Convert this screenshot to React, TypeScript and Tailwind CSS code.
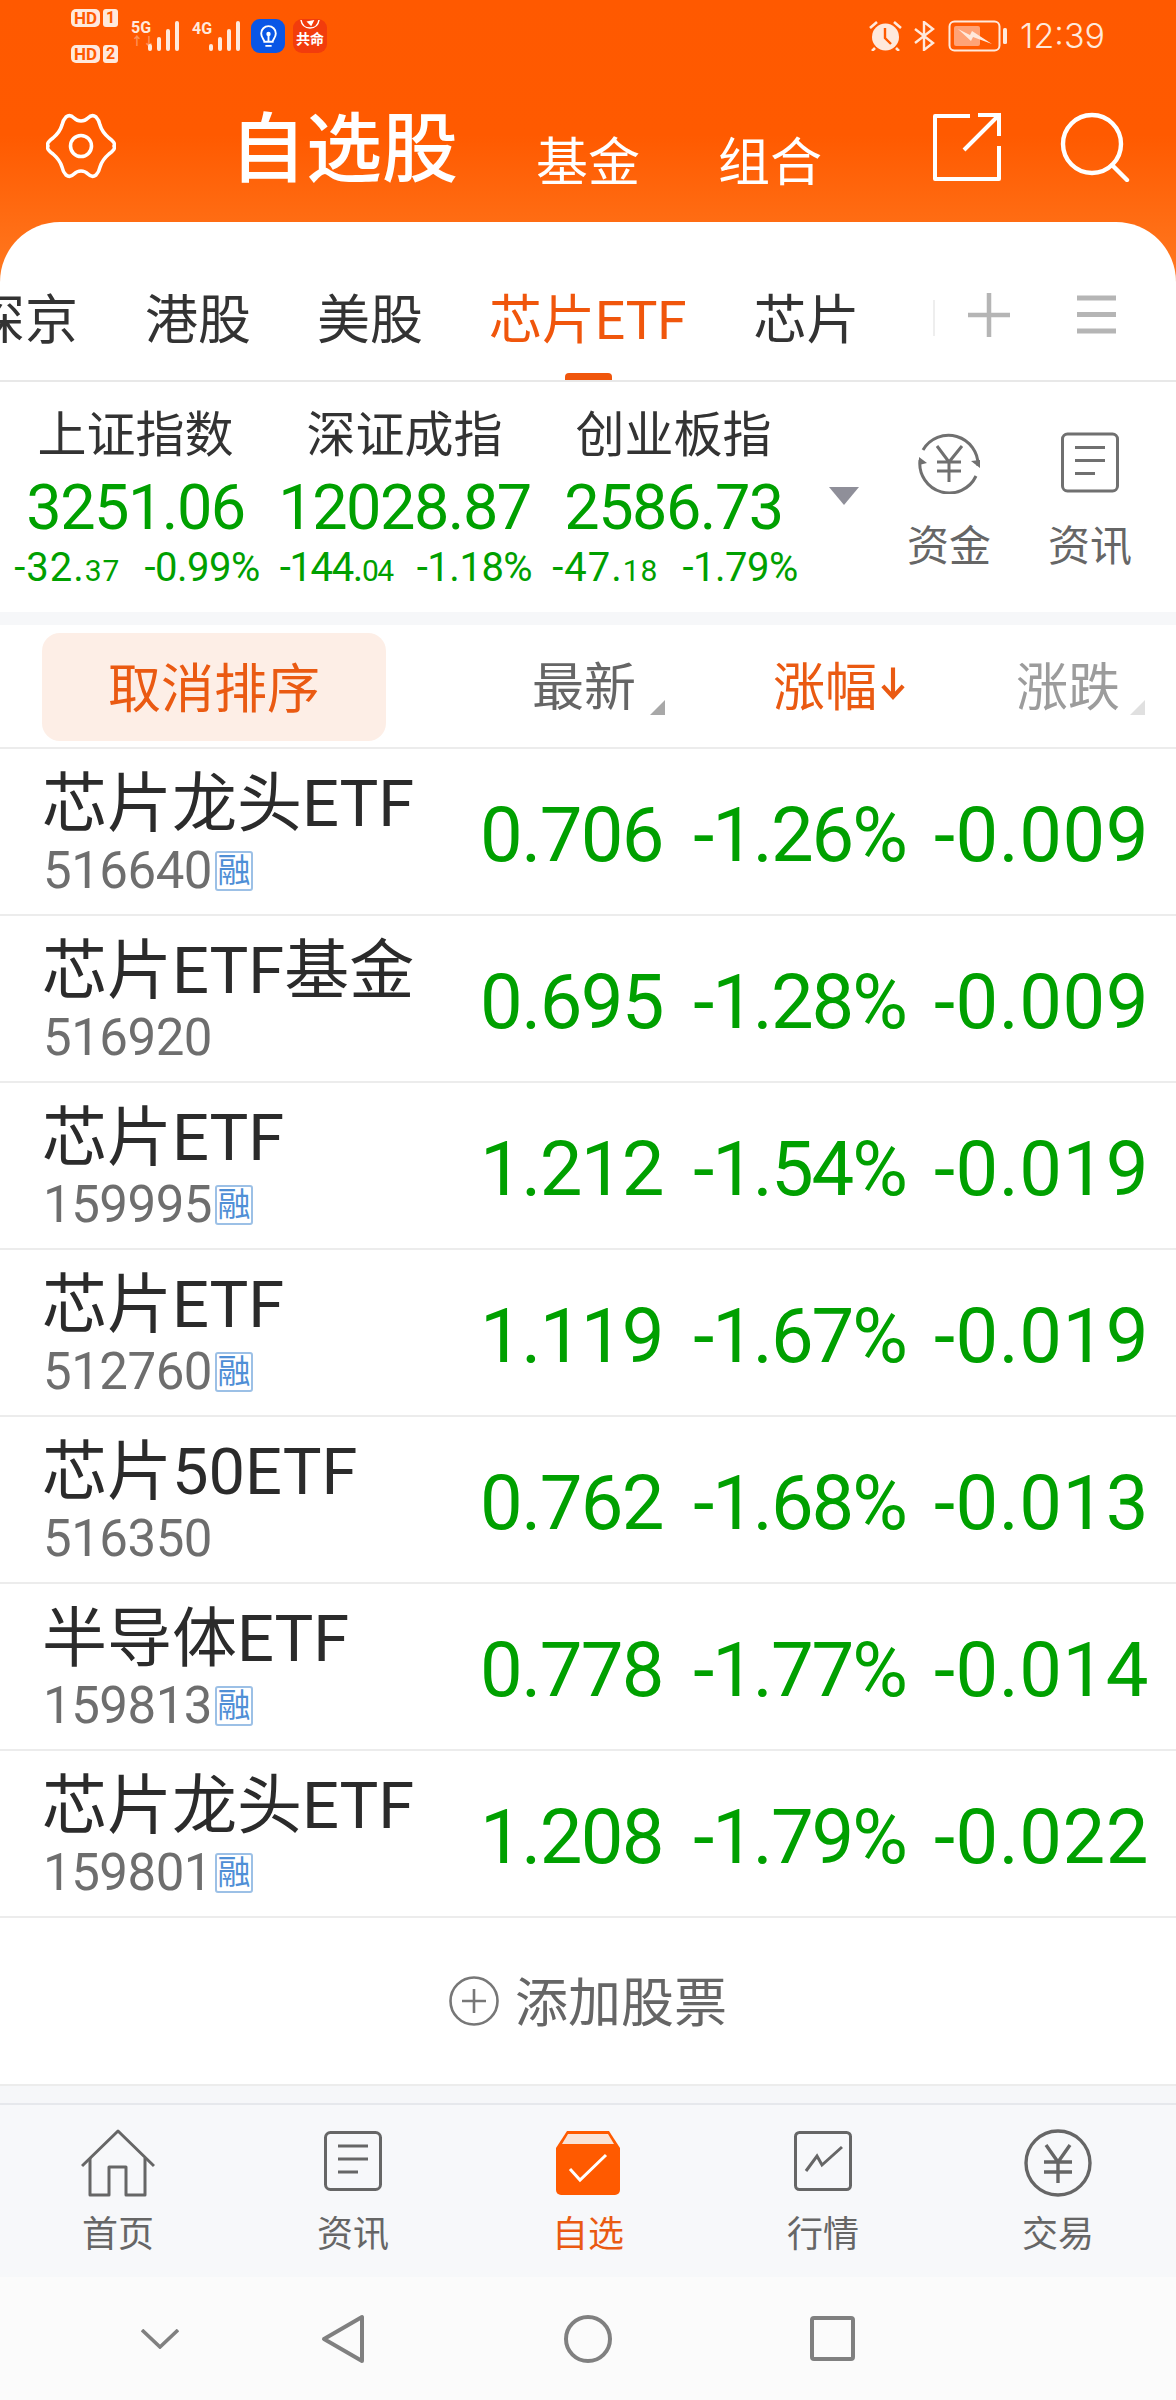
const stocks = [
  { name: "芯片龙头ETF", code: "516640", rong: true, price: "0.706", pct: "-1.26%", diff: "-0.009" },
  { name: "芯片ETF基金", code: "516920", rong: false, price: "0.695", pct: "-1.28%", diff: "-0.009" },
  { name: "芯片ETF", code: "159995", rong: true, price: "1.212", pct: "-1.54%", diff: "-0.019" },
  { name: "芯片ETF", code: "512760", rong: true, price: "1.119", pct: "-1.67%", diff: "-0.019" },
  { name: "芯片50ETF", code: "516350", rong: false, price: "0.762", pct: "-1.68%", diff: "-0.013" },
  { name: "半导体ETF", code: "159813", rong: true, price: "0.778", pct: "-1.77%", diff: "-0.014" },
  { name: "芯片龙头ETF", code: "159801", rong: true, price: "1.208", pct: "-1.79%", diff: "-0.022" },
];

const indices = [
  { name: "上证指数", value: "3251.06", diff: "-32.", dec: "37", pct: "-0.99%", track: "tracking-[1px]" },
  { name: "深证成指", value: "12028.87", diff: "-144.", dec: "04", pct: "-1.18%", track: "tracking-[-1.4px]" },
  { name: "创业板指", value: "2586.73", diff: "-47.", dec: "18", pct: "-1.79%", track: "tracking-[1px]" },
];

function Signal({ className }: { className: string }) {
  return (
    <svg viewBox="0 0 33 32" className={className} fill="#ffe9dc">
      <rect x="0" y="24" width="4" height="7" rx="2" />
      <rect x="9" y="17" width="4" height="14" rx="2" />
      <rect x="18" y="9" width="4" height="22" rx="2" />
      <rect x="27" y="1" width="4" height="30" rx="2" />
    </svg>
  );
}

function HdBadge({ n }: { n: string }) {
  return (
    <div className="flex items-center gap-[3px] h-[18px]">
      <span className="w-[29px] h-[18px] rounded-[5px] bg-[#ffe9dc] text-[#ff5a00] text-[17px] leading-[18px] font-bold text-center">HD</span>
      <span className="w-[15px] h-[18px] rounded-[3px] bg-[#ffe9dc] text-[#ff5a00] text-[16px] leading-[18px] font-bold text-center">{n}</span>
    </div>
  );
}

function StatusBar() {
  return (
    <div className="h-[72px] flex items-center pl-[71px] pr-[71px] text-[#ffe9dc]">
      <div className="flex flex-col gap-[18px] mr-[13px]">
        <HdBadge n="1" />
        <HdBadge n="2" />
      </div>
      <div className="flex flex-col h-[32px] justify-start w-[16px]">
        <span className="text-[16px] leading-[15px] font-bold">5G</span>
        <span className="text-[12px] leading-[14px] opacity-40 font-bold">↑↓</span>
      </div>
      <Signal className="w-[33px] h-[32px] ml-[1px]" />
      <span className="ml-[11px] self-start mt-[21px] w-[16px] text-[16px] leading-[15px] font-bold">4G</span>
      <Signal className="w-[33px] h-[32px] ml-[1px]" />
      <div className="ml-[9px] w-[34px] h-[34px] rounded-[9px] bg-[#0a56e6] flex items-center justify-center">
        <svg viewBox="0 0 24 24" className="w-[25px] h-[25px]" fill="none" stroke="#fff" strokeWidth="1.8">
          <path d="M8 17c0-2-3-4-3-8a7 7 0 0 1 14 0c0 4-3 6-3 8z" />
          <path d="M9 21h6M12 17v-7" />
          <circle cx="12" cy="9.5" r="1.2" fill="#fff" />
        </svg>
      </div>
      <div className="ml-[8px] w-[34px] h-[34px] rounded-[9px] bg-[#f23c0c] flex flex-col items-center overflow-hidden">
        <svg viewBox="0 0 24 10" className="w-[24px] h-[12px] shrink-0" fill="none" stroke="#fff" strokeWidth="1.5">
          <path d="M3 0c1 6 5 8 9 8s8-2 9-8" />
          <path d="M10 2l5-1-2 4z" fill="#fff" />
        </svg>
        <span className="text-[14px] leading-[16px] font-bold text-white">共命</span>
      </div>
      <div className="flex-1" />
      <svg viewBox="0 0 33 30" className="w-[33px] h-[30px]">
        <circle cx="16.5" cy="16" r="13.5" fill="#ffe9dc" />
        <path d="M16 7v10l6 6" fill="none" stroke="#ff5a00" strokeWidth="2.4" />
        <path d="M1 7l7-6M32 7l-7-6M6 27l-3 3M27 27l3 3" stroke="#ffe9dc" strokeWidth="2.6" fill="none" />
      </svg>
      <svg viewBox="0 0 21 30" className="w-[21px] h-[30px] ml-[12px]" fill="none" stroke="#ffe9dc" strokeWidth="2.4">
        <path d="M1 8l18 14-9 7V1l9 7L1 22" />
      </svg>
      <svg viewBox="0 0 60 32" className="w-[60px] h-[32px] ml-[13px]">
        <rect x="1.5" y="1.5" width="50" height="29" rx="5" fill="none" stroke="#ffe9dc" strokeWidth="2" />
        <rect x="6" y="6" width="26" height="20" rx="2" fill="#ffa377" />
        <path d="M10 9l12 6 2-4 20 13-19-7-2 4z" fill="#ffe9dc" />
        <rect x="55" y="8" width="4" height="16" rx="1.5" fill="#ffe9dc" />
      </svg>
      <span className="ml-[12px] text-[34px] leading-[40px] font-['Inter',sans-serif] font-light">12:39</span>
    </div>
  );
}

function Header() {
  return (
    <div className="h-[150px] flex items-start pl-[46px] pr-[46px] text-white">
      <svg viewBox="-1 0 70 66" className="w-[70px] h-[66px] mt-[41px]" fill="none" stroke="#fff" strokeWidth="3.6" strokeLinejoin="round">
        <path d="M34 8Q38 8 41 5Q45 1 49 4Q52 7 53 12Q55 19 62 25Q69 30 67 33Q69 36 62 41Q55 47 53 54Q52 59 49 62Q45 65 41 61Q38 58 34 58Q30 58 27 61Q23 65 19 62Q16 59 15 54Q13 47 6 41Q-1 36 1 33Q-1 30 6 25Q13 19 15 12Q16 7 19 4Q23 1 27 5Q30 8 34 8Z" />
        <circle cx="34" cy="33" r="10.5" />
      </svg>
      <span className="ml-[114px] mt-[33px] text-[76px] leading-[90px] font-medium">自选股</span>
      <span className="ml-[78px] mt-[57px] text-[52px] leading-[70px]">基金</span>
      <span className="ml-[78px] mt-[57px] text-[52px] leading-[70px]">组合</span>
      <div className="flex-1" />
      <svg viewBox="0 0 70 70" className="w-[70px] h-[70px] mt-[40px]" fill="none" stroke="#fff" strokeWidth="4">
        <path d="M38 4H3v63h64V34" strokeLinejoin="round" />
        <path d="M32 38L67 3M46 3h21v21" />
      </svg>
      <svg viewBox="0 0 70 70" className="w-[70px] h-[70px] ml-[58px] mt-[40px]" fill="none" stroke="#fff" strokeWidth="4.4">
        <circle cx="32" cy="32" r="29" />
        <path d="M52 53l15 15" strokeLinecap="round" />
      </svg>
    </div>
  );
}

function Tabs() {
  return (
    <div className="h-[160px] border-b-2 border-[#e8e8e8] flex items-start pt-[64px] text-[53px] leading-[70px] text-[#333] overflow-hidden relative whitespace-nowrap">
      <span className="ml-[-28px] w-[106px] shrink-0">深京</span>
      <span className="ml-[67px] shrink-0">港股</span>
      <span className="ml-[66px] shrink-0">美股</span>
      <span className="ml-[66px] shrink-0 text-[#f0560c]">芯片ETF</span>
      <span className="ml-[67px] shrink-0">芯片</span>
      <span className="ml-[73px] mt-[14px] w-[2px] h-[36px] bg-[#eeeeee] shrink-0" />
      <svg viewBox="0 0 42 44" className="w-[42px] h-[44px] ml-[33px] mt-[7px] shrink-0" fill="none" stroke="#b5b5b5" strokeWidth="4.5">
        <path d="M21 0v44M0 22h42" />
      </svg>
      <svg viewBox="0 0 39 39" className="w-[39px] h-[39px] ml-[67px] mt-[9px] shrink-0" fill="none" stroke="#b5b5b5" strokeWidth="5">
        <path d="M0 3h39M0 19.5h39M0 36h39" />
      </svg>
      <span className="absolute left-[565px] bottom-0 w-[47px] h-[7px] rounded-t-[4px] bg-[#f0560c]" />
    </div>
  );
}

function NewsIcon({ className, color = "#707070" }: { className: string; color?: string }) {
  return (
    <svg viewBox="0 0 58 60" className={className} fill="none" stroke={color} strokeWidth="3">
      <rect x="1.5" y="1.5" width="55" height="57" rx="5" />
      <path d="M14 15h30M14 28h30M14 41h20" />
    </svg>
  );
}

function IndexBar() {
  return (
    <div className="h-[230px] flex items-start">
      <div className="flex pl-[1px] pt-[26px] w-[812px] shrink-0">
        {indices.map(i => (
          <div key={i.name} className="w-[269px] flex flex-col items-center shrink-0">
            <span className="text-[49px] leading-[56px] text-[#333]">{i.name}</span>
            <span className="text-[63px] leading-[72px] mt-[8px] text-[#00a000] tracking-[-1.5px]">{i.value}</span>
            <div className="flex gap-[24px] ml-[3px] text-[40px] leading-[44px] mt-[2px] text-[#00a000] whitespace-nowrap tracking-[-0.5px]">
              <span className={i.track}>{i.diff}<span className="text-[30px]">{i.dec}</span></span>
              <span>{i.pct}</span>
            </div>
          </div>
        ))}
      </div>
      <span className="w-0 h-0 mt-[105px] ml-[17px] border-x-[15px] border-x-transparent border-t-[18px] border-t-[#8f8f99] shrink-0" />
      <div className="ml-[48px] w-[84px] flex flex-col items-center pt-[50px] shrink-0">
        <svg viewBox="0 0 62 62" className="w-[62px] h-[62px]" fill="none" stroke="#707070" strokeWidth="3">
          <path d="M5 18A29.5 29.5 0 0 1 60 34M58 44A29.5 29.5 0 0 1 2 28" />
          <path d="M53 29l9-1v8zM1 25l8 6-8 2z" fill="#707070" stroke="none" />
          <path d="M19 14l12 16 13-16M19 30h24M19 39h24M31 30v20" />
        </svg>
        <span className="text-[42px] leading-[50px] mt-[28px] text-[#666]">资金</span>
      </div>
      <div className="ml-[57px] w-[84px] flex flex-col items-center pt-[50px] shrink-0">
        <NewsIcon className="w-[58px] h-[61px]" />
        <span className="text-[42px] leading-[50px] mt-[29px] text-[#666]">资讯</span>
      </div>
    </div>
  );
}

function SortHeader() {
  return (
    <div className="h-[124px] border-b-2 border-[#ececec] flex items-start text-[52px] leading-[70px]">
      <button className="ml-[42px] mt-[8px] w-[344px] h-[108px] rounded-[18px] bg-[#fdeee6] text-[#ea5a12] text-[53px] leading-[114px]">取消排序</button>
      <span className="ml-[146px] mt-[29px] text-[#666]">最新</span>
      <span className="ml-[14px] mt-[75px] w-0 h-0 border-l-[15px] border-l-transparent border-b-[15px] border-b-[#a8a8a8]" />
      <span className="ml-[108px] mt-[29px] text-[#ea5a12]">涨幅</span>
      <svg viewBox="0 0 26 36" className="w-[24px] h-[36px] ml-[4px] mt-[41px]" fill="none" stroke="#ea5a12" strokeWidth="4.5">
        <path d="M13 0v32M2 20l11 12 11-12" />
      </svg>
      <span className="ml-[111px] mt-[29px] text-[#9c9c9c]">涨跌</span>
      <span className="ml-[10px] mt-[75px] w-0 h-0 border-l-[15px] border-l-transparent border-b-[15px] border-b-[#e0e0e0]" />
    </div>
  );
}

function Row({ s }: { s: (typeof stocks)[number] }) {
  return (
    <div className="h-[167px] border-b-2 border-[#ececec] flex items-center pl-[42px] pr-[27px] shrink-0">
      <div className="flex-1 flex flex-col">
        <span className="text-[65px] leading-[72px] text-[#2b2b2b]">{s.name}</span>
        <div className="flex items-center mt-[7px] h-[48px]">
          <span className="ml-[1px] text-[51px] leading-[48px] text-[#6e6e6e] tracking-[-0.5px]">{s.code}</span>
          {s.rong && (
            <span className="ml-[3px] w-[38px] h-[40px] border-2 border-[#9cc0e6] rounded-[3px] text-[#4f8fd6] text-[33px] leading-[35px] text-center">融</span>
          )}
        </div>
      </div>
      <span className="mt-[6px] w-[200px] text-right text-[76px] leading-[80px] text-[#00a000] tracking-[-1.6px]">{s.price}</span>
      <span className="mt-[6px] w-[243px] text-right text-[76px] leading-[80px] text-[#00a000] tracking-[-2px]">{s.pct}</span>
      <span className="mt-[6px] w-[243px] text-right text-[76px] leading-[80px] text-[#00a000] tracking-[0.5px]">{s.diff}</span>
    </div>
  );
}

function NavItem({ label, active, children }: { label: string; active?: boolean; children: React.ReactNode }) {
  return (
    <div className="w-[235px] flex flex-col items-center pt-[24px]">
      <div className="h-[68px] flex items-center justify-center">{children}</div>
      <span className={`text-[36px] leading-[44px] mt-[16px] ${active ? "text-[#ea5a12]" : "text-[#666]"}`}>{label}</span>
    </div>
  );
}

function BottomNav() {
  return (
    <div className="h-[174px] bg-[#f7f8fa] border-t-2 border-[#e6e8ec] flex justify-center">
      <NavItem label="首页">
        <svg viewBox="0 0 74 68" className="w-[74px] h-[68px]" fill="none" stroke="#666" strokeWidth="3" strokeLinejoin="round">
          <path d="M1 37L37 2l36 35" />
          <path d="M9 29V66H28V38H45V66H64V29" />
        </svg>
      </NavItem>
      <NavItem label="资讯">
        <NewsIcon className="w-[58px] h-[60px] mb-[4px]" color="#666" />
      </NavItem>
      <NavItem label="自选" active>
        <svg viewBox="0 0 64 64" className="w-[64px] h-[64px]">
          <path d="M11 0h42l11 17v42a5 5 0 0 1-5 5H5a5 5 0 0 1-5-5V17z" fill="#ff5a00" />
          <path d="M12 3h40l6 10H6z" fill="#f9e3d7" />
          <path d="M14 38l10 11 26-25" fill="none" stroke="#fff" strokeWidth="3" />
        </svg>
      </NavItem>
      <NavItem label="行情">
        <svg viewBox="0 0 58 60" className="w-[58px] h-[60px] mb-[4px]" fill="none" stroke="#666" strokeWidth="3">
          <rect x="1.5" y="1.5" width="55" height="57" rx="4" />
          <path d="M12 40l11-15 5 9 20-18" />
        </svg>
      </NavItem>
      <NavItem label="交易">
        <svg viewBox="0 0 68 68" className="w-[68px] h-[68px]" fill="none" stroke="#666" strokeWidth="3.4">
          <circle cx="34" cy="34" r="32" />
          <path d="M22 16l12 17 12-17M20 33h28M20 43h28M34 33v21" />
        </svg>
      </NavItem>
    </div>
  );
}

function SystemNav() {
  return (
    <div className="h-[123px] bg-[#fbfbfb] flex items-center pl-[141px]">
      <svg viewBox="0 0 38 20" className="w-[38px] h-[20px] shrink-0" fill="none" stroke="#808080" strokeWidth="3.6">
        <path d="M1 1l18 17L37 1" />
      </svg>
      <svg viewBox="0 0 44 50" className="w-[44px] h-[50px] ml-[142px] shrink-0" fill="none" stroke="#808080" strokeWidth="4" strokeLinejoin="round">
        <path d="M41 3v44L3 25z" />
      </svg>
      <span className="block w-[48px] h-[48px] ml-[199px] rounded-full border-4 border-[#808080] shrink-0" />
      <span className="block w-[45px] h-[45px] ml-[198px] rounded-[4px] border-4 border-[#808080] shrink-0" />
    </div>
  );
}

export default function App() {
  return (
    <div className="w-[1176px] h-[2400px] overflow-hidden bg-[linear-gradient(180deg,#ff5900_0%,#ff5a00_45%,#ff7d25_100%)] bg-size-[100%_300px] bg-no-repeat font-['Roboto','Noto_Sans_CJK_SC',sans-serif]">
      <StatusBar />
      <Header />
      <div className="bg-white rounded-t-[60px] flex flex-col">
        <Tabs />
        <IndexBar />
        <div className="h-[13px] bg-[#f6f7f9]" />
        <SortHeader />
        {stocks.map(s => (
          <Row key={s.code} s={s} />
        ))}
        <div className="h-[168px] flex items-center justify-center border-b-2 border-[#ececec]">
          <svg viewBox="0 0 50 50" className="w-[50px] h-[50px]" fill="none" stroke="#777" strokeWidth="2.6">
            <circle cx="25" cy="25" r="23.5" />
            <path d="M13 25h24M25 13v24" />
          </svg>
          <span className="ml-[16px] mt-[6px] text-[53px] leading-[70px] text-[#666]">添加股票</span>
        </div>
        <div className="h-[17px] bg-[#f6f7f9]" />
      </div>
      <BottomNav />
      <SystemNav />
    </div>
  );
}
